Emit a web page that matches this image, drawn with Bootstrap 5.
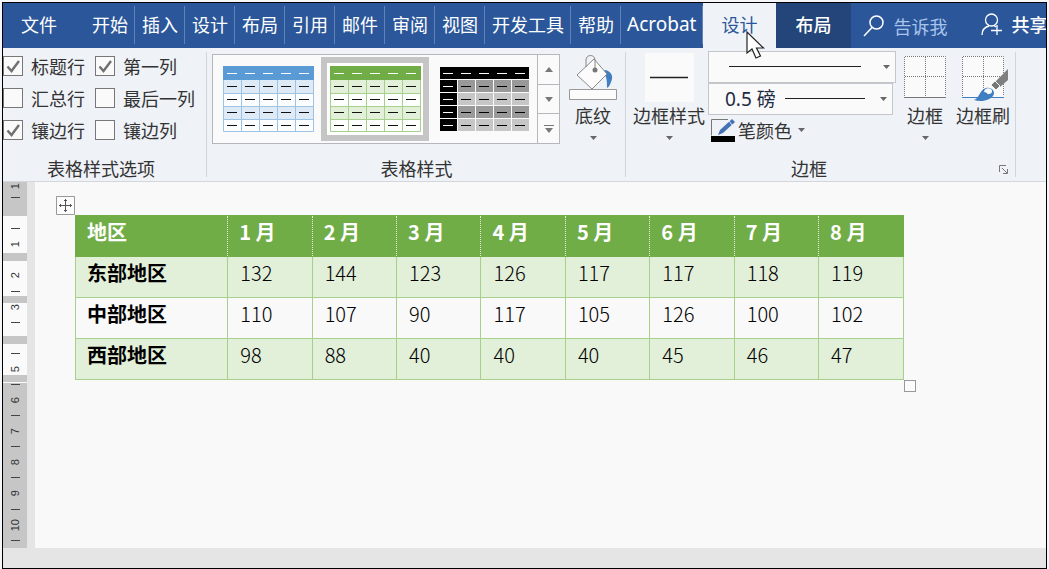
<!DOCTYPE html>
<html lang="zh-CN">
<head>
<meta charset="utf-8">
<meta name="viewport" content="width=device-width, initial-scale=1">
<title>表格样式</title>
<link href="https://cdn.jsdelivr.net/npm/bootstrap@5.3.0/dist/css/bootstrap.min.css" rel="stylesheet">
<script src="https://cdn.jsdelivr.net/npm/bootstrap@5.3.0/dist/js/bootstrap.bundle.min.js"></script>
<style>
  body { font-family: "Noto Sans CJK SC", sans-serif; font-size: 18px; line-height: 24px; color: #333; background: #f4f6fa; padding: 2px 2px 0; }
  .app { border: 1px solid #000; min-height: calc(100vh - 2px); background: #e5e5e5; overflow: hidden; }
  svg { display: block; flex: none; }

  /* tab strip */
  .tabs { background: #2b579a; height: 45px; position: relative; z-index: 1; }
  .tabs .tab { color: #fff; text-decoration: none; padding: 0 6px 3px 7px; display: flex; align-items: center; position: relative; white-space: nowrap; flex: none; }
  .tabs .tab.ruled::after { content: ""; position: absolute; right: 0; top: 3px; bottom: 4px; width: 1px; background: #5f82b8; }
  .tabs .tab.ruled { padding-right: 7px; }
  .tabs .file { padding-left: 18px; padding-right: 28px; }
  .tabs .current { background: #eff2f7; color: #2b579a; padding-left: 18px; padding-right: 19px; }
  .tabs .sibling { background: #24457a; padding-left: 19px; padding-right: 20px; font-weight: 500; }
  .tabs .latin { font-family: "Noto Sans", sans-serif; font-size: 19px; padding-left: 6px; }
  .pointer { position: absolute; left: 43px; top: 28px; z-index: 2; }
  .tell { background: transparent; border: 0; outline: 0; color: #fff; padding: 0; width: 88px; }
  .tell::placeholder { color: #a9c3ea; opacity: 1; }
  .share { background: transparent; border: 0; color: #fff; padding: 0 0 3px; white-space: nowrap; font-weight: 500; }

  /* ribbon */
  .ribbon { background: #eff2f7; height: 134px; border-bottom: 1px solid #d3d6da; }
  .pane { position: relative; display: flex; flex-direction: column; padding: 3px 0 0; flex: none; }
  .pane::after { content: ""; position: absolute; right: 0; top: 4px; bottom: 4px; width: 1px; background: #d2d5da; }
  .pane-body { height: 104px; display: flex; flex: none; }
  .pane-name { text-align: center; line-height: 26px; }
  .checks { display: grid; grid-template-columns: 92px auto; grid-auto-rows: 32px; padding: 0 12px 0 0; margin-top: -1px; align-items: center; }
  .checks .opt { display: flex; align-items: center; gap: 8px; white-space: nowrap; line-height: 22px; }
  .checks input { appearance: none; width: 20px; height: 20px; margin: 0; border: 1px solid #777; background: #fafafa; flex: none; }
  .checks input:checked { background: #fafafa url("data:image/svg+xml,%3Csvg xmlns='http://www.w3.org/2000/svg' viewBox='0 0 18 18'%3E%3Cpath d='M3.5 9.5l4 4.5 7.500-10' fill='none' stroke='%23707070' stroke-width='2.4'/%3E%3C/svg%3E") center/18px no-repeat; }
  .gallery { border: 1px solid #b4b7bb; background: #fafafa; height: 90px; margin: 3px 0 0 5px; }
  .gallery .style-btn { width: 108px; border: 0; background: transparent; padding: 11px 0 0 9px; display: flex; align-items: flex-start; }
  .gallery .style-btn.picked { border: 6px solid #c5c5c5; background: #fff; margin: 2px 0; padding: 3px 0 0 2px; }
  .scroller { width: 22px; border-left: 1px solid #b4b7bb; }
  .scroller button { flex: 1; border: 0; background: #fafafa; padding: 0; display: flex; align-items: center; justify-content: center; }
  .scroller button + button { border-top: 1px solid #b4b7bb; }
  .big { border: 0; background: transparent; padding: 2px 0 0; display: flex; flex-direction: column; align-items: center; color: inherit; white-space: nowrap; }
  .big .glyph { height: 50px; }
  .big .caret { margin-top: 9px; }
  .combo { appearance: none; display: block; border: 1px solid #c3c6ca; border-radius: 0; background-color: #fafafa; color: #1d2a44; height: 32px; padding: 0 0 0 16px; width: 185px; outline: 0;
    background-image: url("data:image/svg+xml,%3Csvg xmlns='http://www.w3.org/2000/svg' viewBox='0 0 7 4'%3E%3Cpath d='M0 0h7L3.500 4z' fill='%23666'/%3E%3C/svg%3E"), linear-gradient(#222, #222);
    background-repeat: no-repeat; background-size: 7px 4px, 80px 1px; background-position: right 5px center, 76px 14px; font-family: "Noto Sans", "Noto Sans CJK SC", sans-serif; font-size: 19px; line-height: 26px; }
  .combo.wide { width: 188px; background-size: 7px 4px, 132px 1px; background-position: right 5px center, 20px 14px; }
  .pen { border: 0; background: transparent; padding: 0 0 0 3px; display: flex; align-items: center; gap: 2px; color: inherit; height: 30px; }
  .launch { position: absolute; right: 8px; bottom: 7px; border: 0; padding: 0; background: transparent; }

  /* document area */
  .ruler { width: 24px; height: 366px; flex: none; overflow: hidden; display: flex; flex-direction: column; font-family: "Liberation Sans", sans-serif; font-size: 11px; color: #333;
    background: linear-gradient(#c6c6c6 34px, #fafafa 34px 71px, #c6c6c6 71px 79px, #fafafa 79px 114px, #c6c6c6 114px 121px, #fafafa 121px 154px, #c6c6c6 154px 162px, #fafafa 162px 193px, #c6c6c6 193px 200px, #fafafa 200px 201px, #c6c6c6 201px); }
  .ruler span { flex: 1 1 0; min-height: 0; display: flex; align-items: center; justify-content: center; }
  .ruler span:first-child { flex-grow: .5; }
  .ruler b { font-weight: 400; writing-mode: vertical-rl; transform: rotate(180deg); line-height: 14px; }
  .ruler i { width: 9px; height: 1px; background: #444; }
  .paper { background: #f9f9f9; margin-left: 8px; padding: 33px 40px 0; min-width: 0; }
  .sheet { position: relative; width: 89%; }
  .grid-table { width: 100%; table-layout: fixed; border-collapse: collapse; color: #000; font-size: 20px; line-height: 31px; }
  .grid-table th, .grid-table td { height: 41px; padding: 0 0 0 12px; vertical-align: top; border: 1px solid #a8d08d; font-weight: 300; white-space: nowrap; }
  .grid-table th { font-weight: 700; padding-left: 11px; }
  .grid-table thead th { background: #70ad47; color: #fff; border: 1px dotted #e8f3df; border-top: 1px solid #70ad47; border-bottom: 1px solid #70ad47; }
  .grid-table thead th:first-child { border-left: 1px solid #70ad47; }
  .grid-table thead th:last-child { border-right: 1px solid #70ad47; }
  .grid-table tbody tr:nth-child(odd) { background: #e2efd9; }
  .grid-table .lead-col { width: 18.4%; }
  .mover { position: absolute; left: -19px; top: -19px; }
  .sizer { position: absolute; left: 100%; top: 100%; width: 12px; height: 12px; border: 1px solid #999; background: #fcfcfc; }
</style>
</head>
<body>
<div class="app d-flex flex-column">
  <nav class="tabs d-flex">
    <a class="tab file" href="#">文件</a>
    <a class="tab ruled" href="#">开始</a>
    <a class="tab ruled" href="#">插入</a>
    <a class="tab ruled" href="#">设计</a>
    <a class="tab ruled" href="#">布局</a>
    <a class="tab ruled" href="#">引用</a>
    <a class="tab ruled" href="#">邮件</a>
    <a class="tab ruled" href="#">审阅</a>
    <a class="tab ruled" href="#">视图</a>
    <a class="tab ruled" href="#">开发工具</a>
    <a class="tab ruled" href="#">帮助</a>
    <a class="tab ruled latin" href="#">Acrobat</a>
    <a class="tab current" href="#" aria-current="page">设计
      <svg class="pointer" width="20" height="30" viewBox="0 0 20 30"><path d="M1 1v21l5-4 4 9 4.500-2-4-8h7z" fill="#fff" stroke="#222" stroke-width="1.200"/></svg>
    </a>
    <a class="tab sibling" href="#">布局</a>
    <label class="d-flex align-items-center ps-2 ms-1 gap-2">
      <svg width="22" height="24" viewBox="0 0 22 24" fill="none" stroke="#fff" stroke-width="1.500"><circle cx="13.500" cy="8.500" r="6.500"/><path d="M9 13.500L1 22"/></svg>
      <input class="tell" type="text" placeholder="告诉我" aria-label="告诉我">
    </label>
    <button class="share d-flex align-items-center gap-2" type="button">
      <svg width="22" height="23" viewBox="0 0 22 23" fill="none" stroke="#fff" stroke-width="1.300"><circle cx="10.500" cy="7" r="6"/><path d="M1 22c0-5 3-8 7-9M13 12.500l2 1.500M10 17.500h11M16 12v10"/></svg>共享
    </button>
  </nav>

  <div class="ribbon d-flex overflow-hidden">
    <section class="pane">
      <div class="pane-body">
        <div class="checks">
          <label class="opt"><input type="checkbox" checked>标题行</label>
          <label class="opt"><input type="checkbox" checked>第一列</label>
          <label class="opt"><input type="checkbox">汇总行</label>
          <label class="opt"><input type="checkbox">最后一列</label>
          <label class="opt"><input type="checkbox" checked>镶边行</label>
          <label class="opt"><input type="checkbox">镶边列</label>
        </div>
      </div>
      <div class="pane-name pe-2">表格样式选项</div>
    </section>

    <section class="pane">
      <div class="pane-body">
        <div class="gallery d-flex">
          <button class="style-btn" type="button" aria-label="蓝色">
            <svg width="92" height="67" viewBox="0 0 92 67">
              <path fill="#fcfdff" d="M1 14h90v52H1z"/><path fill="#deeaf6" d="M1 14h90v13H1zM1 40h90v13H1z"/>
              <path d="M1.500 14v51.500h90V14M1 27.500h90M1 40.500h90M1 53.500h90M19.500 14v52M37.500 14v52M55.500 14v52M73.500 14v52" fill="none" stroke="#9cc2e5"/>
              <path fill="#5b9bd5" d="M1 0h91v14H1z"/>
              <path d="M5 7.500h82" stroke="#fff" stroke-dasharray="10 8"/>
              <path d="M5 20.500h82M5 33.500h82M5 46.500h82M5 59.500h82" stroke="#111" stroke-width="1.200" stroke-dasharray="10 8"/>
            </svg>
          </button>
          <button class="style-btn picked" type="button" aria-label="绿色" aria-pressed="true">
            <svg width="92" height="67" viewBox="0 0 92 67">
              <path fill="#fdfffc" d="M1 14h90v52H1z"/><path fill="#e2efd9" d="M1 14h90v13H1zM1 40h90v13H1z"/>
              <path d="M1.500 14v51.500h90V14M1 27.500h90M1 40.500h90M1 53.500h90M19.500 14v52M37.500 14v52M55.500 14v52M73.500 14v52" fill="none" stroke="#a8d08d"/>
              <path fill="#70ad47" d="M1 0h91v14H1z"/>
              <path d="M5 7.500h82" stroke="#fff" stroke-dasharray="10 8"/>
              <path d="M5 20.500h82M5 33.500h82M5 46.500h82M5 59.500h82" stroke="#111" stroke-width="1.200" stroke-dasharray="10 8"/>
            </svg>
          </button>
          <button class="style-btn" type="button" aria-label="黑色">
            <svg width="92" height="67" viewBox="0 0 92 67">
              <path fill="#c6c6c6" d="M2 14h89v51H2z"/><path fill="#999" d="M2 14h89v13H2zM2 40h89v13H2z"/>
              <path fill="#000" d="M2 1h89v13H2zM2 14h17v51H2z"/>
              <path d="M2 13.500h89M2 26.500h89M2 39.500h89M2 52.500h89M19.500 14v52M37.500 14v52M55.500 14v52M73.500 14v52" fill="none" stroke="#fafafa"/>
              <path d="M5 7.500h82M5 20.500h10M5 33.500h10M5 46.500h10M5 59.500h10" stroke="#fff" stroke-dasharray="10 8"/>
              <path d="M23 20.500h64M23 33.500h64M23 46.500h64M23 59.500h64" stroke="#000" stroke-width="1.200" stroke-dasharray="10 8"/>
            </svg>
          </button>
          <div class="scroller d-flex flex-column">
            <button type="button" aria-label="上"><svg width="8" height="5"><path d="M0 5h8L4 0z" fill="#777"/></svg></button>
            <button type="button" aria-label="下"><svg width="8" height="5"><path d="M0 0h8L4 5z" fill="#777"/></svg></button>
            <button type="button" aria-label="更多"><svg width="10" height="8"><path d="M0 .5h10" stroke="#777"/><path d="M1 3h8L5 8z" fill="#777"/></svg></button>
          </div>
        </div>
        <button class="big px-2" type="button">
          <svg class="glyph" width="50" height="50" viewBox="0 0 50 50">
            <path d="M37 17c6 1 9 6 6 12-1 3-2 5-4 6 0-7 0-12-4-16z" fill="#3f7fc1"/>
            <path d="M26 6L39 21 24 36 9 22z" fill="#fcfcfc" stroke="#888"/>
            <path d="M18 14V7c0-6 9-6 9 0v10" fill="none" stroke="#888"/><circle cx="27" cy="17" r="2.500" fill="#777"/>
            <path d="M1.500 36.500h47v10h-47z" fill="#fcfcfc" stroke="#999"/>
          </svg>
          底纹
          <svg class="caret" width="7" height="4"><path d="M0 0h7L3.500 4z" fill="#666"/></svg>
        </button>
      </div>
      <div class="pane-name">表格样式</div>
    </section>

    <section class="pane">
      <div class="pane-body">
        <button class="big ms-1" type="button">
          <svg class="glyph" width="78" height="50" viewBox="0 0 78 50"><path fill="#fafafa" d="M15 0h49v49H15z"/><path d="M20 24.500h38" stroke="#222" stroke-width="1.300"/></svg>
          边框样式
          <svg class="caret" width="7" height="4"><path d="M0 0h7L3.500 4z" fill="#666"/></svg>
        </button>
        <div>
          <select class="combo wide" aria-label="笔样式"><option></option></select>
          <select class="combo" aria-label="笔划粗细"><option>0.5 磅</option></select>
          <button class="pen" type="button">
            <svg width="25" height="24" viewBox="0 0 25 24">
              <path d="M17 1.500H.5v16" fill="none" stroke="#777"/><path d="M21 1l3 3L12 15l-5 2 2-5z" fill="#4472b4"/><path d="M18 3l3 4" stroke="#dbe5f2"/><path d="M0 18h24v6H0z"/>
            </svg>
            笔颜色
            <svg class="ms-1" width="7" height="4"><path d="M0 0h7L3.500 4z" fill="#666"/></svg>
          </button>
        </div>
        <button class="big ms-2" type="button">
          <svg class="glyph" width="42" height="50" viewBox="0 0 42 50">
            <path fill="#fafafa" d="M0 3h42v41H0z"/><path d="M.5 43V3.500h41V43M21.500 4v39M1 23.500h40" fill="none" stroke="#777" stroke-dasharray="1 1"/><path d="M0 44.500h42" stroke="#777"/>
          </svg>
          边框
          <svg class="caret" width="7" height="4"><path d="M0 0h7L3.500 4z" fill="#666"/></svg>
        </button>
        <button class="big ms-2 me-1" type="button">
          <svg class="glyph" width="58" height="50" viewBox="0 0 58 50">
            <path fill="#fafafa" d="M8 3h42v41H8z"/><path d="M8.500 43V3.500h41V43M29.500 4v39M9 23.500h40" fill="none" stroke="#777" stroke-dasharray="1 1"/><path d="M8 44.500h42" stroke="#3f7fc1"/>
            <path d="M54 16v11l-8 7-5-5z" fill="#7f7f7f"/><path d="M41 28l5 5-4 4-5-5z" fill="#777" stroke="#eff2f7"/>
            <path d="M20 47c6-2 5-10 12-12 6-1 10 4 7 8-4 5-13 6-19 4z" fill="#3f7fc1"/><path d="M30 39c0-3 4-5 7-3 2 2 1 5-2 5-2 1-2-2-5-2z" fill="#fafafa"/>
          </svg>
          边框刷
        </button>
      </div>
      <div class="pane-name pe-4">边框</div>
      <button class="launch" type="button" aria-label="边框和底纹"><svg width="9" height="9" viewBox="0 0 9 9" fill="none" stroke="#777"><path d="M.5 7V.5H7M3 3l5 5M8.500 4v4.500H4"/></svg></button>
    </section>
  </div>

  <main class="d-flex">
    <div class="ruler">
      <span><b>1</b></span><span><i></i></span><span></span><span><i></i></span><span><b>1</b></span><span></span>
      <span><b>2</b></span><span><i></i></span><span><b>3</b></span><span><i></i></span><span></span><span><i></i></span>
      <span><b>5</b></span><span><i></i></span><span><b>6</b></span><span><i></i></span><span><b>7</b></span><span><i></i></span>
      <span><b>8</b></span><span><i></i></span><span><b>9</b></span><span><i></i></span><span><b>10</b></span><span><i></i></span>
    </div>
    <div class="paper flex-grow-1">
      <div class="sheet">
        <svg class="mover" width="19" height="19" viewBox="0 0 19 19" fill="none" stroke="#555"><path d="M.5.5h18v18H.5z" fill="#fcfcfc" stroke="#999"/><path d="M9.500 3v13M3 9.500h13M8 5l1.500-1.500L11 5M8 14l1.500 1.500L11 14M5 8L3.500 9.500 5 11M14 8l1.500 1.500L14 11"/></svg>
        <table class="grid-table">
          <thead>
            <tr><th class="lead-col">地区</th><th>1 月</th><th>2 月</th><th>3 月</th><th>4 月</th><th>5 月</th><th>6 月</th><th>7 月</th><th>8 月</th></tr>
          </thead>
          <tbody>
            <tr><th>东部地区</th><td>132</td><td>144</td><td>123</td><td>126</td><td>117</td><td>117</td><td>118</td><td>119</td></tr>
            <tr><th>中部地区</th><td>110</td><td>107</td><td>90</td><td>117</td><td>105</td><td>126</td><td>100</td><td>102</td></tr>
            <tr><th>西部地区</th><td>98</td><td>88</td><td>40</td><td>40</td><td>40</td><td>45</td><td>46</td><td>47</td></tr>
          </tbody>
        </table>
        <span class="sizer"></span>
      </div>
    </div>
  </main>
</div>
</body>
</html>
